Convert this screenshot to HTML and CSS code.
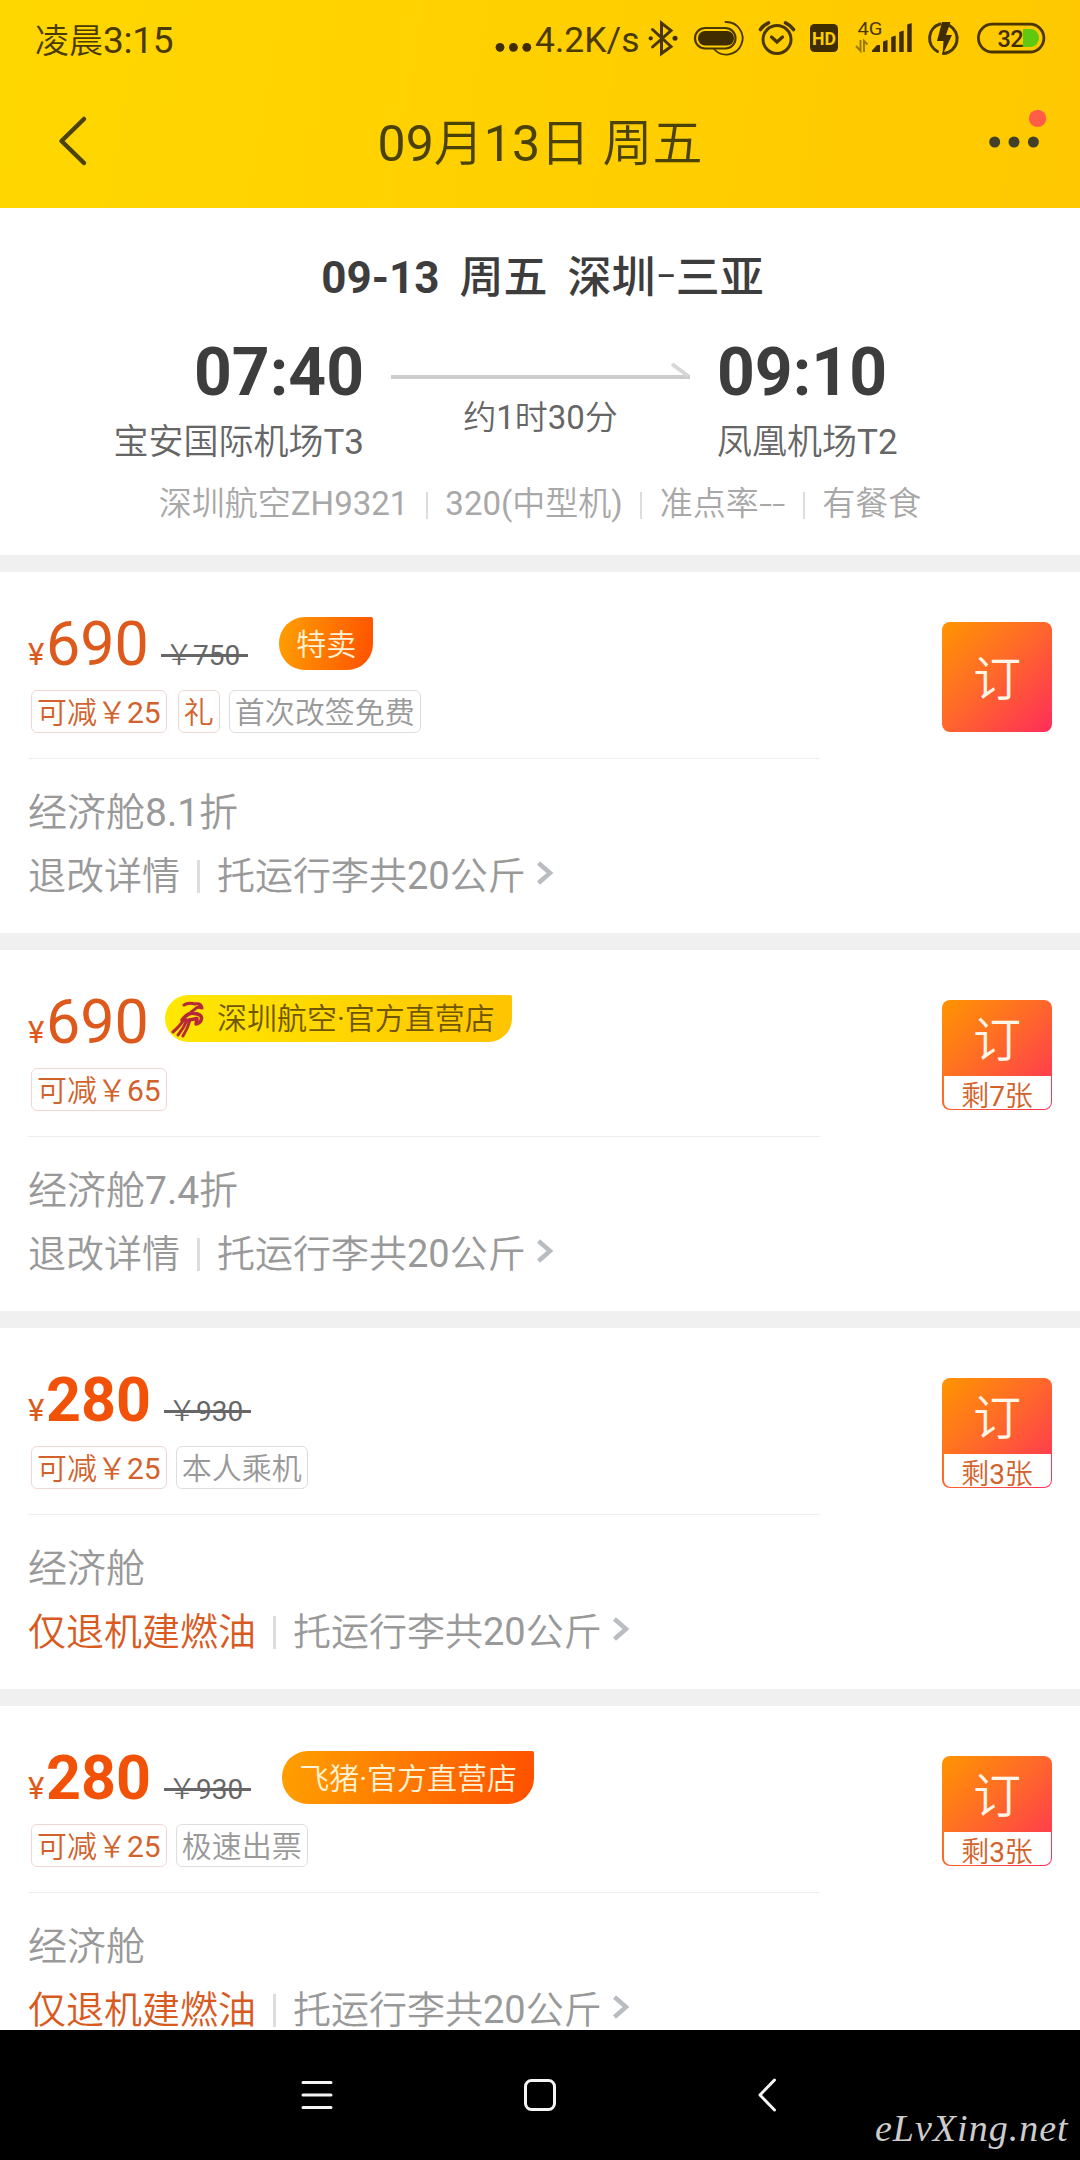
FILE: index.html
```html
<!DOCTYPE html>
<html lang="zh-CN">
<head>
<meta charset="utf-8">
<title>09月13日 周五 深圳-三亚</title>
<link rel="stylesheet" href="styles.css">
</head>
<body>
<header class="top">
  <div class="status">
    <div class="status-time">凌晨<span class="clock">3:15</span></div>
    <div class="status-right">
      <svg class="dots" width="40" height="76" viewBox="495 0 40 76"><circle cx="500" cy="47.3" r="4.4"/><circle cx="513.4" cy="47.3" r="4.4"/><circle cx="526.8" cy="47.3" r="4.4"/></svg>
      <span class="speed">4.2K/s</span>
      <svg width="40" height="76" viewBox="645 0 40 76"><path class="ln" stroke-width="3" d="M652.5 29.500L671 46.500L661.500 53.500V23L671 30.500L652.500 47"/><circle cx="650.700" cy="38.300" r="2.100"/><circle cx="675" cy="38.300" r="2.500"/></svg>
      <svg width="65" height="76" viewBox="685 0 65 76"><rect class="ln" stroke-width="2.200" x="695" y="28" width="40.500" height="20.500" rx="10.200"/><rect x="698" y="31" width="36" height="14.600" rx="7"/><path class="ln" stroke-width="1.800" d="M725.500 22A16.300 16.300 0 1 1 714 49"/></svg>
      <svg width="52" height="76" viewBox="750 0 52 76"><circle class="ln" stroke-width="3" cx="777" cy="39.500" r="14"/><path class="ln" stroke-width="3.200" d="M771.500 37L777 42L782.500 37"/><path class="ln" stroke-width="3.600" d="M760.500 29.500Q763.500 25 768.500 22.800M793.500 29.500Q790.500 25 785.500 22.800"/></svg>
      <svg width="48" height="76" viewBox="802 0 48 76"><rect x="810" y="24" width="28" height="28" rx="4.500"/><text class="hd" x="812" y="44.800" textLength="24" lengthAdjust="spacingAndGlyphs">HD</text></svg>
      <svg width="70" height="76" viewBox="850 0 70 76"><text class="net" x="857.500" y="35" textLength="25" lengthAdjust="spacingAndGlyphs">4G</text><path class="updown" d="M860.500 40V51L856 46M864 52V41L867.500 44.500"/><path d="M872 52V50.500L877 45H880V52zM883 52V41.500L887.500 40V52zM891.200 52V37L895.700 35.500V52zM899.200 52V32L903.700 30.500V52zM907.200 52V24.500L911.700 23V52z"/></svg>
      <svg width="50" height="76" viewBox="920 0 50 76"><path class="ln" stroke-width="3" d="M940 24A15 15 0 0 0 937.500 51.500M949.500 25.500A15 15 0 0 1 943.500 53.500"/><path d="M942 22H950.500L946 35H952L942.500 55L943.500 41H937z"/></svg>
      <svg width="84" height="76" viewBox="970 0 84 76"><rect class="ln" stroke-width="2.800" x="978.400" y="24.200" width="65.500" height="27.800" rx="13.900"/><path class="charge" d="M1023 29H1031A8 9 0 0 1 1031 47H1023z"/><text class="batt" x="997.500" y="46.500" textLength="26">32</text></svg>
    </div>
  </div>
  <div class="titlebar">
    <svg width="120" height="132" viewBox="0 76 120 132"><path class="back" d="M84 119L61.500 141L84 163"/></svg>
    <h1 class="title">09月13日 周五</h1>
    <svg width="120" height="132" viewBox="960 76 120 132"><g class="more"><ellipse cx="994.700" cy="142" rx="5.500" ry="5.600"/><ellipse cx="1014" cy="142" rx="5.500" ry="5.600"/><ellipse cx="1033.400" cy="142" rx="5.500" ry="5.600"/></g><circle class="badge" cx="1037.600" cy="118.400" r="8.700"/></svg>
  </div>
</header>

<main class="page">
  <section class="flight">
    <h2 class="route"><span>09-13</span><span class="cn">周五</span><span class="cn">深圳<i class="dash">-</i>三亚</span></h2>
    <div class="legs">
      <div class="end depart"><div class="time">07:40</div><div class="airport">宝安国际机场T3</div></div>
      <div class="between">
        <svg class="arrow" width="299" height="60" viewBox="0 0 299 60"><path class="shaft" d="M0 39H299"/><path class="barb" d="M281 26L297 38"/></svg>
        <div class="duration">约1时30分</div>
      </div>
      <div class="end"><div class="time">09:10</div><div class="airport">凤凰机场T2</div></div>
    </div>
    <div class="info"><span>深圳航空ZH9321</span><span>320(中型机)</span><span>准点率<i class="dash">-</i><i class="dash">-</i></span><span>有餐食</span></div>
  </section>

  <section class="fare">
    <div class="detail">
      <div class="price-row"><span class="yen">¥</span><span class="price">690</span><span class="was">￥750</span><span class="tag">特卖</span></div>
      <div class="chips"><span class="chip hot">可减￥25</span><span class="chip hot gift">礼</span><span class="chip">首次改签免费</span></div>
      <div class="cabin">经济舱8.1折</div>
      <div class="rules"><span>退改详情</span><span>托运行李共20公斤</span><svg class="go" width="18" height="26" viewBox="0 0 18 26"><path d="M2.500 3L14 13L2.500 23"/></svg></div>
    </div>
    <button class="book"><span class="word">订</span></button>
  </section>

  <section class="fare">
    <div class="detail">
      <div class="price-row"><span class="yen">¥</span><span class="price">690</span><span class="tag airline"><svg width="36" height="38" viewBox="0 0 36 38"><path class="crest" d="M14 5Q18 2 25 4Q31 3 32 8Q27 6 24.500 9.500Q22 11 18 15"/><path class="crest wing" d="M12 20Q18 12 24 13.500Q32 14 31.500 18.500Q31 23 26 24L27 18.500L19 20"/><path class="crest" d="M15 18Q11 25 3 32M17 20Q14 28 8 35M20 20Q18 28 13 36"/></svg>深圳航空·官方直营店</span></div>
      <div class="chips"><span class="chip hot">可减￥65</span></div>
      <div class="cabin">经济舱7.4折</div>
      <div class="rules"><span>退改详情</span><span>托运行李共20公斤</span><svg class="go" width="18" height="26" viewBox="0 0 18 26"><path d="M2.500 3L14 13L2.500 23"/></svg></div>
    </div>
    <button class="book limited"><span class="word">订</span><span class="left">剩7张</span></button>
  </section>

  <section class="fare">
    <div class="detail">
      <div class="price-row"><span class="yen">¥</span><span class="price best">280</span><span class="was">￥930</span></div>
      <div class="chips"><span class="chip hot">可减￥25</span><span class="chip">本人乘机</span></div>
      <div class="cabin">经济舱</div>
      <div class="rules"><span class="strict">仅退机建燃油</span><span>托运行李共20公斤</span><svg class="go" width="18" height="26" viewBox="0 0 18 26"><path d="M2.500 3L14 13L2.500 23"/></svg></div>
    </div>
    <button class="book limited"><span class="word">订</span><span class="left">剩3张</span></button>
  </section>

  <section class="fare">
    <div class="detail">
      <div class="price-row"><span class="yen">¥</span><span class="price best">280</span><span class="was">￥930</span><span class="tag">飞猪·官方直营店</span></div>
      <div class="chips"><span class="chip hot">可减￥25</span><span class="chip">极速出票</span></div>
      <div class="cabin">经济舱</div>
      <div class="rules"><span class="strict">仅退机建燃油</span><span>托运行李共20公斤</span><svg class="go" width="18" height="26" viewBox="0 0 18 26"><path d="M2.500 3L14 13L2.500 23"/></svg></div>
    </div>
    <button class="book limited"><span class="word">订</span><span class="left">剩3张</span></button>
  </section>
</main>

<nav class="navbar">
  <svg width="40" height="40" viewBox="0 0 40 40"><path d="M6 7.500H34M6 20H34M6 32.500H34"/></svg>
  <svg width="40" height="40" viewBox="0 0 40 40"><rect x="5.500" y="5.500" width="29" height="29" rx="6"/></svg>
  <svg width="40" height="40" viewBox="0 0 40 40"><path d="M29.500 5L15 20L29.500 35"/></svg>
  <span class="watermark">eLvXing.net</span>
</nav>
</body>
</html>
```
FILE: styles.css
```css
* { box-sizing: border-box; }
html, body { margin: 0; }
body {
  width: 1080px;
  height: 2160px;
  overflow: hidden;
  display: flex;
  flex-direction: column;
  background: #fff;
  color: #3d3d3d;
  font-family: Roboto, "Noto Sans CJK SC DemiLight", "Noto Sans CJK SC", sans-serif;
}
svg { display: block; flex: none; }
h1, h2 { margin: 0; font-weight: 400; }
span, div { white-space: nowrap; }

/* status bar and title */
.top {
  flex: none;
  height: 208px;
  background: linear-gradient(100deg, #ffd700, #ffc800);
}
.status { display: flex; justify-content: space-between; height: 76px; padding: 0 26px 0 35px; color: #4a3a00; }
.status-time { font-size: 34px; line-height: 82px; }
.clock { font-size: 37px; letter-spacing: -.3px; }
.status-right { display: flex; }
.status svg { fill: #3f2d00; }
.status .ln { fill: none; stroke: #4a3700; stroke-linecap: round; }
.speed { width: 110px; font-size: 35.500px; line-height: 80px; }
.status .hd { fill: #ffcd00; font-size: 18px; font-weight: 700; }
.net { font-size: 18.500px; fill: #4a3700; }
.status .updown { fill: none; stroke: #9a7c00; stroke-width: 2; }
.status .charge { fill: #5fc810; }
.batt { font-size: 23.500px; font-weight: 500; }
.titlebar { display: flex; justify-content: space-between; height: 132px; }
.title { font-size: 50px; line-height: 136px; color: #4a4208; }
.back { fill: none; stroke: #4a4208; stroke-width: 4.500; stroke-linecap: round; stroke-linejoin: round; }
.more { fill: #43402a; }
.badge { fill: #ff5d48; }

/* flight summary */
.page { flex: 1; min-height: 0; overflow: hidden; background: #f0f0f0; display: flex; flex-direction: column; gap: 17px; }
.flight { flex: none; height: 347px; padding-top: 44px; background: #fff; }
.route { display: flex; justify-content: center; gap: 20px; padding-left: 5px; font-size: 44px; line-height: 52px; font-weight: 700; }
.route .cn { font-family: Roboto, "Noto Sans CJK SC Medium", "Noto Sans CJK SC", sans-serif; font-weight: 500; }
.dash { display: inline-block; width: .4em; line-height: 1; font-family: "Noto Sans CJK SC DemiLight", "Noto Sans CJK SC", sans-serif; font-style: normal; text-align: center; transform: translateY(-.11em) scaleX(1.35); }
.route .dash { width: .46em; }
.legs { display: grid; grid-template-columns: 364px 299px 1fr; column-gap: 27px; margin-top: 34px; }
.depart { text-align: right; }
.time { font-size: 66px; line-height: 70px; font-weight: 700; }
.airport { margin-top: 13px; font-size: 35px; line-height: 44px; color: #666; }
.arrow path { fill: none; stroke: #ccc; stroke-width: 4; }
.arrow .barb { stroke: #d6d6d6; }
.duration { font-size: 33px; line-height: 40px; text-align: center; color: #666; }
.info { display: flex; justify-content: center; margin-top: 19px; font-size: 33px; line-height: 40px; color: #a8a8a8; }
.info span { display: flex; align-items: center; }
.info span + span::before { content: ""; width: 2px; height: 27px; margin: 2px 17.500px 0; background: #ddd; }

/* fare cards */
.fare { flex: none; height: 361px; padding: 45px 28px 0; display: flex; justify-content: space-between; background: #fff; color: #999; }
.detail { width: 792px; }
.price-row { display: flex; align-items: baseline; height: 54px; color: #de5a1c; }
.yen { width: 18px; font-size: 31px; }
.price { width: 107px; font-size: 61px; line-height: 54px; }
.price.best { width: 110px; font-weight: 700; color: #f25207; }
.was { position: relative; margin-left: 8px; padding: 0 8px 0 4px; font-size: 28px; line-height: 40px; color: #666; }
.was::after { content: ""; position: absolute; left: 0; right: 0; top: 18px; height: 3px; background: #666; }
.tag {
  align-self: flex-start;
  height: 53px;
  margin-left: 31px;
  padding: 0 17px;
  border-radius: 26px 2px 26px 26px;
  background: linear-gradient(100deg, #ffa000, #ff5000);
  color: #fff3d6;
  font-size: 30px;
  line-height: 55px;
}
.airline { display: flex; align-items: center; gap: 11px; height: 47px; margin-left: 12px; padding: 0 17px 0 5px; line-height: 47px; background: linear-gradient(100deg, #ffe800, #ffc400); color: #6e5600; }
.crest { fill: none; stroke: #b5283a; stroke-width: 3; stroke-linecap: round; stroke-linejoin: round; }
.wing { stroke-width: 3.500; }
.chips { display: flex; gap: 9px; margin: 19px 0 0 3px; padding-bottom: 25px; }
.chip { height: 43px; padding: 1px 5px 0; border: 1px solid #dedede; border-radius: 6px; font-size: 30px; line-height: 41px; }
.hot { border-color: #f0d8d2; color: #d2622c; }
.gift { margin-left: 2px; }
.cabin { border-top: 1px solid #eee; padding-top: 31px; font-size: 39px; line-height: 46px; }
.rules { display: flex; align-items: center; margin-top: 17px; font-size: 38px; line-height: 46px; }
.rules span + span { display: flex; align-items: center; }
.rules span + span::before { content: ""; width: 3px; height: 33px; margin: 0 17px; background: #ddd; }
.strict { color: #d95a1e; }
.go { margin: -7px 0 0 10px; }
.go path { fill: none; stroke: #b9bdc2; stroke-width: 4.500; }

.book {
  flex: none;
  display: flex;
  flex-direction: column;
  width: 110px;
  height: 110px;
  margin: 5px 0 0;
  padding: 0 1.500px 1.500px;
  border: 0;
  border-radius: 8px;
  background: linear-gradient(135deg, #ff9500, #ff6a28 45%, #ff2d5a);
  font-family: inherit;
  color: #fff6ea;
}
.word { font-size: 48px; line-height: 116px; text-align: center; }
.limited .word { height: 76px; line-height: 82px; }
.left { height: 32.500px; border-radius: 0 0 7px 7px; background: #fff; color: #d4612a; font-size: 28px; line-height: 41px; text-align: center; }

/* system navigation */
.navbar { flex: none; height: 130px; display: grid; grid-template-columns: 223px 225px 100px 1fr; align-items: center; padding-left: 297px; background: #000; }
.navbar svg { fill: none; stroke: #f5f5f5; stroke-width: 3; stroke-linecap: round; stroke-linejoin: round; }
.watermark { align-self: end; padding: 0 0 7px 30px; color: #ccc; font: italic 38px/50px "Liberation Serif", serif; letter-spacing: 1px; }
```
